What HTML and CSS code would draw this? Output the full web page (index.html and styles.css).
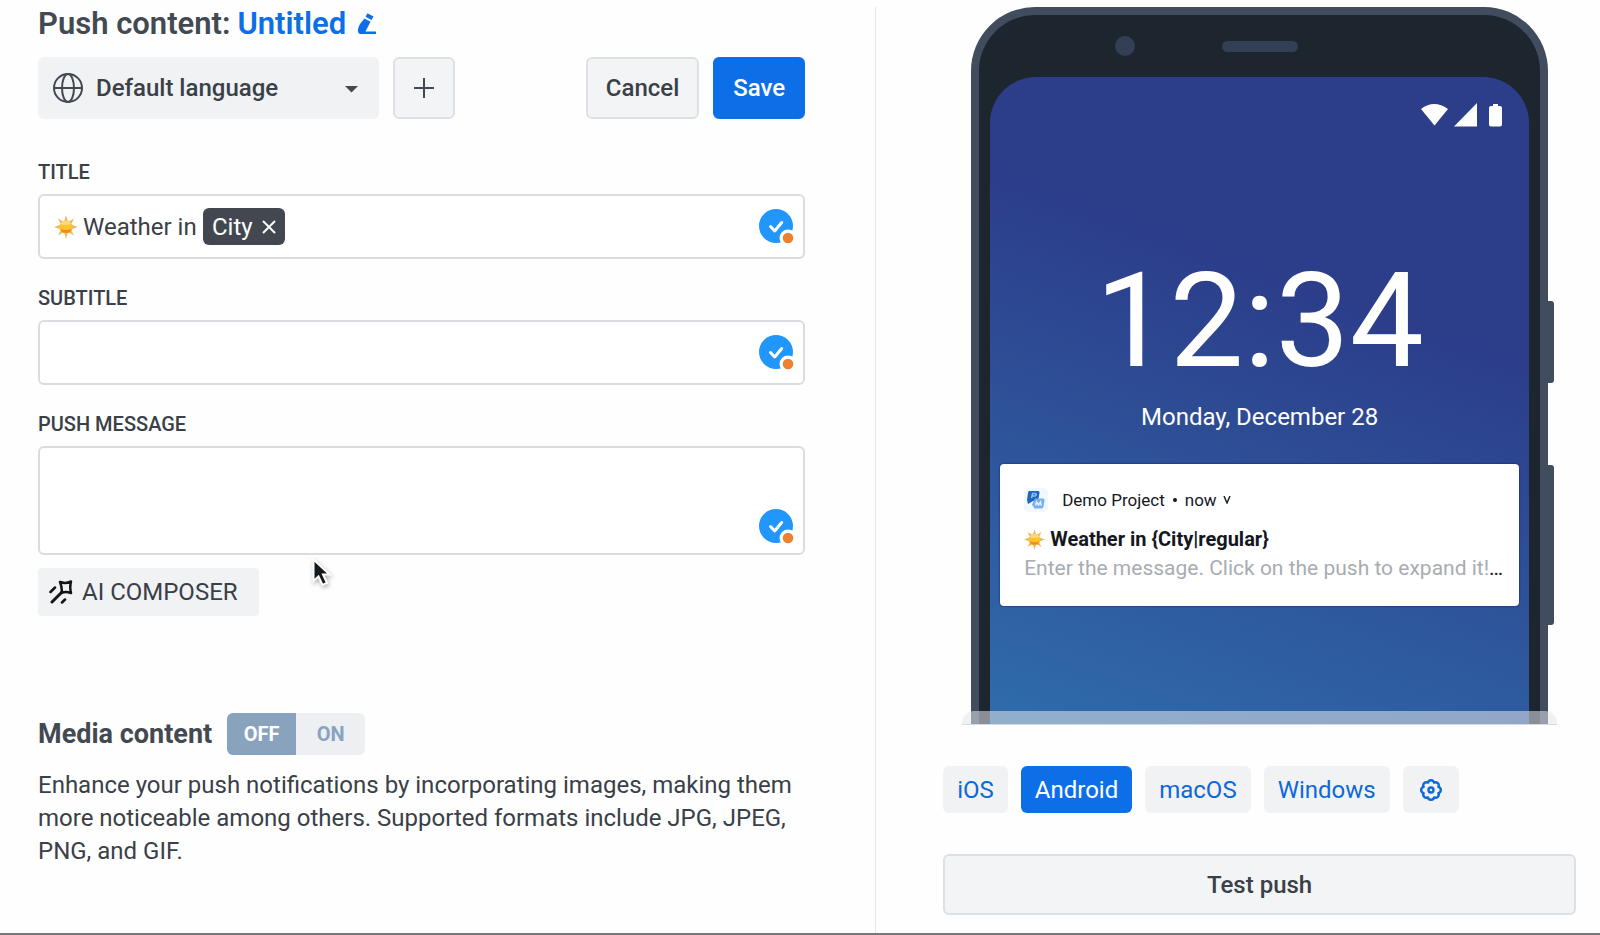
FILE: index.html
```
<!DOCTYPE html>
<html lang="en">
<head>
  <meta charset="UTF-8" />
  <meta name="viewport" content="width=device-width, initial-scale=1.0"/>
  <title>Push content</title>
  <link rel="stylesheet" href="styles.css">
</head>
<body>
  <!-- shared shapes -->
  <svg class="sprite" aria-hidden="true">
    <symbol id="sun" viewBox="0 0 24 24">
      <path fill="#eeb765" d="M12 0l2 7 6-3.500-3 6 7 2.500-7 2.500 3 6-6-3.500-2 7-2-7-6 3.500 3-6-7-2.500 7-2.500-3-6 6 3.500z"/>
      <circle cx="12" cy="12" r="6.500" fill="#fbc42c"/>
      <path fill="#f08a1d" d="M6 14a6.500 6.500 0 0 0 12 0q-6 2-12 0z"/>
      <path fill="#fcd980" d="M6.500 9a6.300 6.300 0 0 1 11 0q-5.500 2-11 0z"/>
    </symbol>
    <symbol id="check" viewBox="0 0 36 36">
      <circle cx="17" cy="17" r="17" fill="#2196fb"/>
      <path d="M11.500 17.500l4.200 4.500 7-8.500" fill="none" stroke="#fff" stroke-width="3" stroke-linecap="round" stroke-linejoin="round"/>
      <circle cx="29" cy="29" r="8.500" fill="#fff"/>
      <circle cx="29" cy="29" r="5.300" fill="#ee8130"/>
    </symbol>
  </svg>

  <main class="page">
    <section class="editor">
      <h1>Push content: <a href="#">Untitled</a>
        <button type="button" class="edit-name" aria-label="Edit name">
          <svg width="20" height="24" viewBox="0 0 20 24" fill="#0d6fe8">
            <path d="M10.500 1.200l6 3.200-2 3.600-6-3.200z"/>
            <path d="M7.500 6.500l6 3.300-5 9.700h10.500v2.500H4C1.500 22 .5 20 1 17.500q.5-3 2-5.500z"/>
          </svg>
        </button>
      </h1>

      <form id="pushForm">
        <div class="toolbar">
          <div class="language">
            <svg class="globe" width="30" height="30" viewBox="0 0 30 30" fill="none" stroke="#434951" stroke-width="2">
              <circle cx="15" cy="15" r="14"/>
              <ellipse cx="15" cy="15" rx="6" ry="14"/>
              <path d="M1 15h28"/>
            </svg>
            <select id="language" name="language" aria-label="Language">
              <option>Default language</option>
            </select>
            <svg class="caret" width="13" height="7" viewBox="0 0 13 7"><path d="M0 0h13L6.500 6.500z" fill="#434951"/></svg>
          </div>
          <button type="button" class="btn btn-add" aria-label="Add language">
            <svg width="20" height="20" viewBox="0 0 20 20" stroke="#434951" stroke-width="2"><path d="M10 0v20M0 10h20"/></svg>
          </button>
          <button type="button" class="btn btn-cancel">Cancel</button>
          <button type="submit" class="btn btn-save">Save</button>
        </div>

        <div class="form-group">
          <label for="title">TITLE</label>
          <div class="field">
            <svg class="emoji" width="24" height="24"><use href="#sun"/></svg>
            <input type="text" id="title" name="title" class="title-text" value="Weather in" />
            <span class="tag">City
              <button type="button" aria-label="Remove City">
                <svg width="14" height="14" viewBox="0 0 14 14" stroke="#fff" stroke-width="2"><path d="M1 1l12 12M13 1L1 13"/></svg>
              </button>
            </span>
            <svg class="badge" width="36" height="36"><use href="#check"/></svg>
          </div>
        </div>

        <div class="form-group">
          <label for="subtitle">SUBTITLE</label>
          <div class="field">
            <input type="text" id="subtitle" name="subtitle" />
            <svg class="badge" width="36" height="36"><use href="#check"/></svg>
          </div>
        </div>

        <div class="form-group">
          <label for="message">PUSH MESSAGE</label>
          <div class="field field-message">
            <textarea id="message" name="message"></textarea>
            <svg class="badge" width="36" height="36"><use href="#check"/></svg>
            <svg class="cursor" width="22" height="30" viewBox="0 0 22 30">
              <path d="M1.500 1.500v21.500l5-4.500 4 8.500 4.500-2-4-8.500h6.500z" fill="#15181d" stroke="#fff" stroke-width="2"/>
            </svg>
          </div>
        </div>

        <button type="button" class="composer">
          <svg width="24" height="24" viewBox="0 0 24 24" fill="none" stroke="#111418" stroke-width="2.500" stroke-linecap="round" stroke-linejoin="round">
            <path d="M11 2q5.500 2 11-.5-1.500 5.500 0 11.500-5.500-2-9.500 0 1-5-1.500-11z"/>
            <path d="M13 12L3 22" stroke-width="3"/>
            <path d="M1.500 12L6 7.500M13 22.500l3-3"/>
          </svg>
          AI COMPOSER
        </button>

        <div class="media-head">
          <h2>Media content</h2>
          <div class="toggle" role="radiogroup" aria-label="Media content">
            <input type="radio" id="mediaOff" name="media" value="off" checked />
            <label for="mediaOff">OFF</label>
            <input type="radio" id="mediaOn" name="media" value="on" />
            <label for="mediaOn">ON</label>
          </div>
        </div>
        <p class="hint">Enhance your push notifications by incorporating images, making them more noticeable among others. Supported formats include JPG, JPEG, PNG, and GIF.</p>
      </form>
    </section>

    <section class="preview">
      <div class="stage">
        <div class="phone">
          <span class="side-key power"></span>
          <span class="side-key volume"></span>
          <span class="camera"></span>
          <span class="speaker"></span>
          <div class="screen">
            <div class="status">
              <svg width="82" height="24" viewBox="0 0 82 24" fill="#fff">
                <path d="M0 6Q13-4 27 6L13.500 22.500z"/>
                <path d="M56 0v23.500H33z"/>
                <path d="M72 1h5v2h2q2 0 2 2v16.500q0 2-2 2h-9q-2 0-2-2V5q0-2 2-2h2z"/>
              </svg>
            </div>
            <div class="clock">12:34</div>
            <div class="date">Monday, December 28</div>
            <div class="notification">
              <div class="app">
                <svg width="24" height="24" viewBox="0 0 24 24">
                  <rect width="24" height="24" rx="5" fill="#eef8fe"/>
                  <path d="M5 3h9q2 0 1.500 2l-1 6q-.5 2-2.500 2H9l-5 3-1-4 1-7q.2-2 1-2z" fill="#2364bd"/>
                  <path d="M7.500 10l1.200-4.500h2.500q2 1 0 2.500H8" fill="none" stroke="#8fc0f0" stroke-width="1.500"/>
                  <path d="M11 10.500h8q2 0 1.500 2l-1 6q-.3 2-2 2h-7l-2.500-4z" fill="#79afe9"/>
                  <path d="M11.500 17.500l1-3.500 2 3 2-3 .7 3.500" fill="none" stroke="#dff1ff" stroke-width="1.500"/>
                </svg>
                <span>Demo Project</span><span class="dot"></span><span>now</span>
                <svg class="chevron" width="8" height="8" viewBox="0 0 8 8" fill="none" stroke="#20252b" stroke-width="1.500"><path d="M1 0l3 7 3-7"/></svg>
              </div>
              <div class="push-title"><svg width="21" height="21"><use href="#sun"/></svg>Weather in {City|regular}</div>
              <div class="push-text"><span>Enter the message. Click on the push to expand it!</span>…</div>
            </div>
          </div>
        </div>
        <div class="fade"></div>
      </div>

      <div class="platforms">
        <button type="button">iOS</button>
        <button type="button" class="active">Android</button>
        <button type="button">macOS</button>
        <button type="button">Windows</button>
        <button type="button" class="settings" aria-label="Settings">
          <svg width="22" height="22" viewBox="0 0 22 22" fill="none" stroke="#0d68d8" stroke-width="2.400" stroke-linejoin="round">
            <path d="M18.400 14.100a3.200 3.200 0 0 1-4.300 4.300a3.200 3.200 0 0 1-6.200 0a3.200 3.200 0 0 1-4.300-4.300a3.200 3.200 0 0 1 0-6.200a3.200 3.200 0 0 1 4.300-4.300a3.200 3.200 0 0 1 6.200 0a3.200 3.200 0 0 1 4.300 4.300a3.200 3.200 0 0 1 0 6.200z"/>
            <circle cx="11" cy="11" r="2.500"/>
          </svg>
        </button>
      </div>
      <button type="button" class="btn btn-test">Test push</button>
    </section>
  </main>
</body>
</html>
```

FILE: styles.css
```
* {
  box-sizing: border-box;
}

body {
  margin: 0;
  min-height: 100vh;
  display: flex;
  font-family: Roboto, sans-serif;
  font-size: 24px;
  color: #3a4048;
  background: #fefefe;
  border-bottom: 2px solid #77777c;
}

button, input, select, textarea {
  font: inherit;
  color: inherit;
}

button {
  padding: 0;
  border: none;
  background: none;
  cursor: pointer;
}

.sprite {
  position: absolute;
  width: 0;
  height: 0;
}

.page {
  flex: 1;
  display: grid;
  grid-template-columns: minmax(0, 547fr) minmax(0, 453fr);
}

.editor {
  padding: 6px 70px 20px 38px;
}

h1 {
  display: flex;
  align-items: center;
  gap: 7px;
  margin: 0 0 15px;
  font-size: 31px;
  line-height: 36px;
  font-weight: 600;
  color: #434951;
}

h1 a {
  color: #0d6fe8;
  text-decoration: none;
}

.edit-name {
  display: flex;
  margin-left: 4px;
}

.toolbar {
  display: flex;
  gap: 14px;
  margin-bottom: 41px;
}

.language {
  position: relative;
  width: 341px;
  height: 62px;
}

.language select {
  width: 100%;
  height: 100%;
  padding: 0 40px 0 58px;
  appearance: none;
  border: none;
  border-radius: 6px;
  background: #f1f2f4;
  font-weight: 500;
}

.globe {
  position: absolute;
  left: 15px;
  top: 16px;
}

.caret {
  position: absolute;
  right: 21px;
  top: 29px;
}

.btn {
  height: 62px;
  padding: 0 18px;
  border: 2px solid #dde1e5;
  border-radius: 6px;
  background: #f3f4f6;
  font-weight: 500;
}

.btn-add {
  display: flex;
  align-items: center;
  justify-content: center;
  width: 62px;
  padding: 0;
}

.btn-cancel {
  margin-left: auto;
}

.btn-save {
  border-color: #0d6fe8;
  background: #0d6fe8;
  color: #fff;
}

.form-group {
  margin-bottom: 27px;
}

.form-group label {
  display: block;
  margin-bottom: 10px;
  font-size: 20px;
  line-height: 24px;
  font-weight: 500;
}

.field {
  position: relative;
  display: flex;
  align-items: center;
  height: 65px;
  padding: 0 60px 0 14px;
  border: 2px solid #d9dde1;
  border-radius: 6px;
  background: #fff;
}

.field input, .field textarea {
  flex: 1;
  padding: 0;
  border: none;
  outline: none;
  background: none;
}

.field .title-text {
  flex: none;
  width: 115px;
  margin: 0 5px;
}

.field-message {
  height: 109px;
}

.field textarea {
  height: 80px;
  resize: none;
}

.tag {
  display: flex;
  align-items: center;
  gap: 9px;
  height: 37px;
  padding: 0 9px;
  border-radius: 6px;
  background: #434850;
  color: #fff;
}

.tag button {
  display: flex;
}

.badge {
  position: absolute;
  right: 8px;
  bottom: 12px;
}

.field-message .badge {
  bottom: 8px;
}

/* mouse pointer over the form */
.cursor {
  position: absolute;
  left: 272px;
  top: 110px;
  z-index: 1;
  filter: drop-shadow(1px 2px 2px rgba(0, 0, 0, 0.3));
}

.form-group:has(.field-message) {
  margin-bottom: 13px;
}

.composer {
  display: flex;
  align-items: center;
  gap: 9px;
  height: 48px;
  padding: 0 21px 0 11px;
  border-radius: 4px;
  background: #f1f2f4;
}

.media-head {
  display: flex;
  align-items: center;
  gap: 15px;
  margin-top: 97px;
}

h2 {
  margin: 0;
  font-size: 27px;
  line-height: 40px;
  font-weight: 700;
  color: #434951;
}

.toggle {
  display: flex;
  height: 42px;
  border-radius: 6px;
  overflow: hidden;
  background: #edeff2;
}

.toggle input {
  position: absolute;
  opacity: 0;
}

.toggle label {
  width: 69px;
  text-align: center;
  font-size: 20px;
  line-height: 42px;
  font-weight: 700;
  color: #88a3c2;
  cursor: pointer;
}

.toggle input:checked + label {
  background: #89a3be;
  color: #fff;
}

.hint {
  margin: 14px 0 0;
  line-height: 33px;
}

.preview {
  position: relative;
  padding: 7px 24px 10px 68px;
}

.preview::before {
  content: "";
  position: absolute;
  left: 0;
  top: 7px;
  bottom: 0;
  border-left: 1px solid #e4e7ea;
}

.stage {
  position: relative;
  height: 718px;
  padding: 0 28px;
}

.phone {
  position: relative;
  height: 100%;
  padding: 62px 11px 0;
  border: 8px solid #414c5f;
  border-bottom: none;
  border-radius: 64px 64px 0 0;
  background: #1d262f;
}

.side-key {
  position: absolute;
  right: -14px;
  width: 7px;
  border-radius: 0 3px 3px 0;
  background: #414c5f;
}

.power {
  top: 286px;
  height: 82px;
}

.volume {
  top: 450px;
  height: 160px;
}

.camera {
  position: absolute;
  left: 136px;
  top: 21px;
  width: 20px;
  height: 20px;
  border-radius: 50%;
  background: #333f54;
}

.speaker {
  position: absolute;
  left: 50%;
  top: 26px;
  width: 76px;
  height: 11px;
  margin-left: -38px;
  border-radius: 6px;
  background: #333f54;
}

.screen {
  height: 100%;
  padding: 26px 10px 0;
  border-radius: 46px 46px 0 0;
  background: linear-gradient(200deg, #2c3d8a 34%, #2e5399 64%, #2f6cac 100%);
  color: #fff;
  text-align: center;
}

.status {
  display: flex;
  justify-content: flex-end;
  padding-right: 16px;
}

.clock {
  margin-top: 114px;
  font-size: 132px;
  line-height: 160px;
}

.date {
  line-height: 32px;
}

.notification {
  margin-top: 31px;
  padding: 24px;
  height: 142px;
  border-radius: 4px;
  background: #fff;
  color: #14181e;
  text-align: left;
  box-shadow: 0 0 2px #0a1a60;
}

.app {
  display: flex;
  align-items: center;
  height: 24px;
  font-size: 17px;
}

.app svg:first-child {
  margin-right: 14px;
}

.dot {
  width: 4px;
  height: 4px;
  margin: 0 8px;
  border-radius: 50%;
  background: #14181e;
}

.chevron {
  margin-left: 6px;
}

.push-title {
  display: flex;
  align-items: center;
  gap: 5px;
  margin-top: 12px;
  font-size: 20px;
  line-height: 30px;
  font-weight: 700;
}

.push-text {
  font-size: 21px;
  line-height: 28px;
  white-space: nowrap;
}

.push-text span {
  color: #a7acb2;
}

.fade {
  position: absolute;
  left: 19px;
  right: 19px;
  bottom: 0;
  height: 14px;
  border-radius: 12px 12px 0 0;
  background: rgba(228, 230, 234, 0.55);
  border-bottom: 1px solid #d4dae2;
}

.platforms {
  display: flex;
  gap: 13px;
  margin: 41px 0;
}

.platforms button {
  height: 47px;
  padding: 0 14px;
  border-radius: 6px;
  background: #f1f2f4;
  color: #0d68d8;
}

.platforms .active {
  background: #0d6fe8;
  color: #fff;
}

.platforms .settings {
  display: flex;
  align-items: center;
  padding: 0 17px;
}

.btn-test {
  width: 100%;
  height: 61px;
}
```
